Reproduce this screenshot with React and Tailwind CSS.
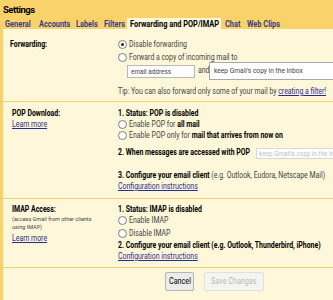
import React from "react";

function Radio({ checked }) {
  return (
    <span className="inline-flex items-center justify-center w-[9px] h-[9px] rounded-full border border-[#808080] bg-white mr-[2px] shrink-0">
      {checked && <span className="w-[3px] h-[3px] rounded-full bg-[#222]" />}
    </span>
  );
}

function Line({ children, className = "", radio = false, checked = false }) {
  return (
    <div className={"h-[11px] flex items-center whitespace-nowrap " + className}>
      {radio && <Radio checked={checked} />}
      <span className="inline-block leading-[11px] origin-left scale-x-[0.77]">{children}</span>
    </div>
  );
}

function Link({ children }) {
  return <span className="text-[#2b2b8f] underline">{children}</span>;
}

function Tab({ children, w, active = false, className = "" }) {
  return (
    <span className={"shrink-0 h-[11px] leading-[10px] whitespace-nowrap " + w + " " + (active ? "bg-[#fff7d9] text-black pl-[3px] " : "text-[#3a3a8c] underline ") + className}>
      <span className="inline-block origin-left scale-x-[0.82]">{children}</span>
    </span>
  );
}

function Sep() {
  return <div className="h-[1px] bg-[#f1d36e]" />;
}

export default function App() {
  return (
    <div className="w-[333px] h-[300px] overflow-hidden bg-[#fad26a] font-['Roboto','Liberation_Sans',sans-serif] text-[9px] text-[#444]">
      <div className="h-[29px] flex flex-col">
        <div className="pl-[3px] pt-[4px] h-[18px] leading-[11px] text-[9.5px] tracking-[-0.5px] font-bold text-black">Settings</div>
        <div className="flex items-end h-[11px] pl-[5px] text-[9px] font-bold">
          <Tab w="w-[34px]" className="pt-[1px]">General</Tab>
          <Tab w="w-[37px]" className="pt-[1px]">Accounts</Tab>
          <Tab w="w-[28px]" className="pt-[1px]">Labels</Tab>
          <Tab w="w-[23px]" className="pt-[1px]">Filters</Tab>
          <Tab w="w-[94px]" active className="pt-[1px]">Forwarding and POP/IMAP</Tab>
          <Tab w="w-[22px]" className="ml-[4px] pt-[1px]">Chat</Tab>
          <Tab w="w-[40px]" className="pt-[1px]">Web Clips</Tab>
        </div>
      </div>
      <div className="ml-[3px] bg-[#fff7d9] h-[271px]">
        {/* Forwarding */}
        <div className="flex pt-[10px] pb-[4px]">
          <div className="w-[115px] shrink-0 pl-[7px] font-bold text-black">
            <Line>Forwarding:</Line>
          </div>
          <div className="flex flex-col">
            <Line radio checked>Disable forwarding</Line>
            <Line radio className="mt-[2px]">Forward a copy of incoming mail to</Line>
            <div className="flex items-center h-[18px] pl-[9px] mt-[-1px]">
              <div className="w-[68px] h-[13px] shrink-0 bg-white border border-[#b9b9b9] leading-[11px] pl-[3px] text-[8px] whitespace-nowrap overflow-hidden">
                <span className="inline-block origin-left scale-x-[0.8]">email address</span>
              </div>
              <span className="w-[14px] shrink-0 pl-[3px] whitespace-nowrap"><span className="inline-block origin-left scale-x-[0.77]">and</span></span>
              <div className="w-[140px] h-[18px] shrink-0 bg-white border border-[#a8a8a8] leading-[16px] pl-[4px] text-[8px] whitespace-nowrap">
                <span className="inline-block origin-left scale-x-[0.83]">keep Gmail's copy in the Inbox</span>
              </div>
            </div>
            <Line className="mt-[6px]">Tip: You can also forward only some of your mail by <Link>creating a filter!</Link></Line>
          </div>
        </div>
        <Sep />
        {/* POP */}
        <div className="flex pt-[6px] pb-[6px]">
          <div className="w-[115px] shrink-0 pl-[9px]">
            <Line className="font-bold text-black">POP Download:</Line>
            <Line><Link>Learn more</Link></Line>
          </div>
          <div className="flex flex-col">
            <Line className="font-bold text-black">1. Status: POP is disabled</Line>
            <Line radio>Enable POP for <b className="text-black">all mail</b></Line>
            <Line radio>Enable POP only for <b className="text-black">mail that arrives from now on</b></Line>
            <div className="flex items-center h-[14px] mt-[5px] whitespace-nowrap">
              <span className="w-[138px] shrink-0 font-bold text-black">
                <span className="inline-block origin-left scale-x-[0.77]">2. When messages are accessed with POP</span>
              </span>
              <div className="w-[120px] h-[11px] shrink-0 bg-white border border-[#d8d8d8] text-[#c4c4c4] leading-[9px] pl-[2px] text-[8px]">
                <span className="inline-block origin-left scale-x-[0.8]">keep Gmail's copy in the Inbox</span>
              </div>
            </div>
            <Line className="mt-[10px]"><b className="text-black">3. Configure your email client</b> (e.g. Outlook, Eudora, Netscape Mail)</Line>
            <Line><Link>Configuration instructions</Link></Line>
          </div>
        </div>
        <Sep />
        {/* IMAP */}
        <div className="flex pt-[5px] pb-[5px]">
          <div className="w-[115px] shrink-0 pl-[9px]">
            <Line className="font-bold text-black">IMAP Access:</Line>
            <div className="text-[5.5px] leading-[8px] whitespace-nowrap">(access Gmail from other clients<br />using IMAP)</div>
            <Line className="mt-[2px]"><Link>Learn more</Link></Line>
          </div>
          <div className="flex flex-col">
            <Line className="font-bold text-black">1. Status: IMAP is disabled</Line>
            <Line radio>Enable IMAP</Line>
            <Line radio className="mt-[2px]">Disable IMAP</Line>
            <Line className="mt-[1px] font-bold text-black">2. Configure your email client (e.g. Outlook, Thunderbird, iPhone)</Line>
            <Line><Link>Configuration instructions</Link></Line>
          </div>
        </div>
        <Sep />
        <div className="flex pl-[162px] pt-[4px] gap-[10px]">
          <div className="w-[29px] h-[19px] border border-[#b5b5b5] bg-[#ececec] rounded-[2px] flex items-center justify-center text-[8.5px] text-black">
            <span className="inline-block scale-x-[0.85]">Cancel</span>
          </div>
          <div className="w-[60px] h-[19px] border border-[#e0e0e0] bg-[#f4f4f0] rounded-[2px] flex items-center justify-center text-[8.5px] text-[#bbbbbb]">
            <span className="inline-block scale-x-[0.85]">Save Changes</span>
          </div>
        </div>
      </div>
    </div>
  );
}
